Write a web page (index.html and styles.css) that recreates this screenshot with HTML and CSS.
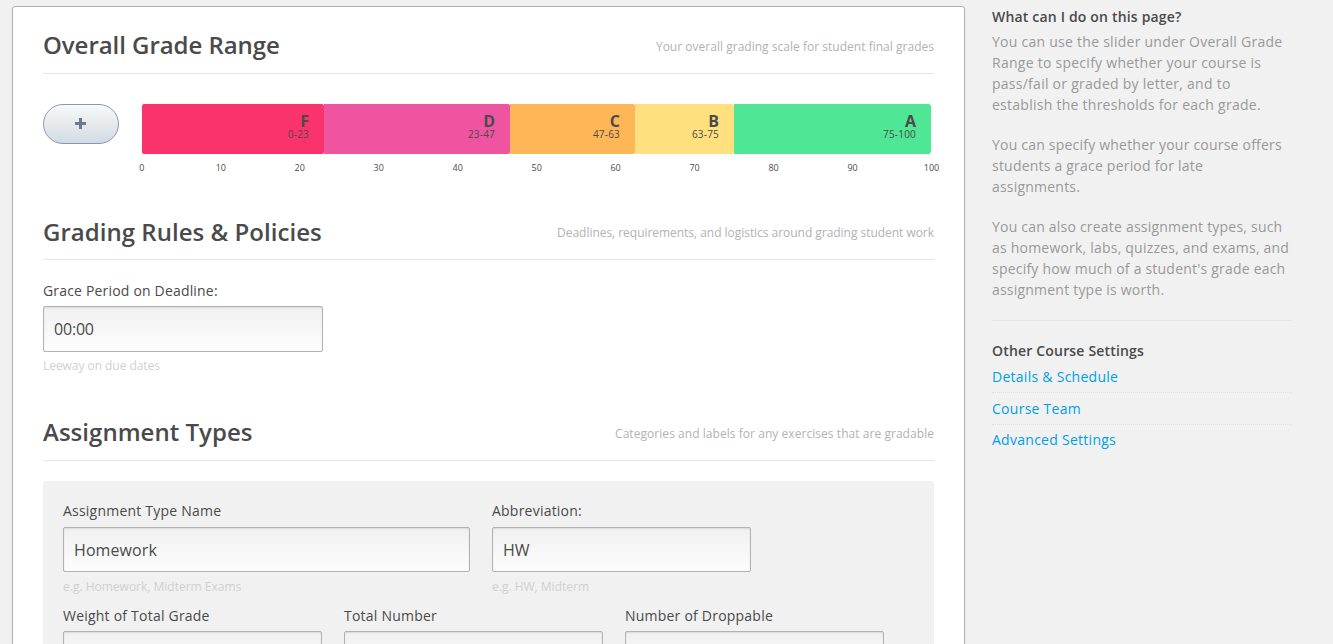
FILE: index.html
```html
<!DOCTYPE html>
<html lang="en">
<head>
<meta charset="utf-8">
<title>Grading</title>
<link rel="stylesheet" href="styles.css">
</head>
<body>
<div class="page">
  <main class="content">
    <section class="group group-range">
      <header class="head"><h2>Overall Grade Range</h2><span class="tip">Your overall grading scale for student final grades</span></header>
      <div class="grade">
        <button class="add" aria-label="Add grade"><svg width="12" height="12" viewBox="0 0 12 12"><path d="M4 0h3v4h4v3h-4v4h-3v-4h-4v-3h4z" fill="#6c7a8c"/></svg></button>
        <div class="scale">
          <div class="bar">
            <div class="seg seg-f"><b>F</b><span>0-23</span></div>
            <div class="seg seg-d"><b>D</b><span>23-47</span></div>
            <div class="seg seg-c"><b>C</b><span>47-63</span></div>
            <div class="seg seg-b"><b>B</b><span>63-75</span></div>
            <div class="seg seg-a"><b>A</b><span>75-100</span></div>
          </div>
          <div class="ticks"><span>0</span><span>10</span><span>20</span><span>30</span><span>40</span><span>50</span><span>60</span><span>70</span><span>80</span><span>90</span><span>100</span></div>
        </div>
      </div>
    </section>
    <section class="group group-rules">
      <header class="head"><h2>Grading Rules &amp; Policies</h2><span class="tip">Deadlines, requirements, and logistics around grading student work</span></header>
      <div class="field grace">
        <label for="grace">Grace Period on Deadline:</label>
        <input id="grace" type="text" value="00:00">
        <span class="hint">Leeway on due dates</span>
      </div>
    </section>
    <section class="group group-types">
      <header class="head"><h2>Assignment Types</h2><span class="tip">Categories and labels for any exercises that are gradable</span></header>
      <div class="card">
        <div class="row">
          <div class="field wide">
            <label for="name">Assignment Type Name</label>
            <input id="name" type="text" value="Homework">
            <span class="hint">e.g. Homework, Midterm Exams</span>
          </div>
          <div class="field short">
            <label for="abbr">Abbreviation:</label>
            <input id="abbr" type="text" value="HW">
            <span class="hint">e.g. HW, Midterm</span>
          </div>
        </div>
        <div class="row">
          <div class="field short"><label for="weight">Weight of Total Grade</label><input id="weight" type="text"></div>
          <div class="field short"><label for="total">Total Number</label><input id="total" type="text"></div>
          <div class="field short"><label for="drop">Number of Droppable</label><input id="drop" type="text"></div>
        </div>
      </div>
    </section>
  </main>
  <aside class="side">
    <section class="help">
      <h3>What can I do on this page?</h3>
      <p>You can use the slider under Overall Grade Range to specify whether your course is pass/fail or graded by letter, and to establish the thresholds for each grade.</p>
      <p>You can specify whether your course offers students a grace period for late assignments.</p>
      <p>You can also create assignment types, such as homework, labs, quizzes, and exams, and specify how much of a student's grade each assignment type is worth.</p>
    </section>
    <section class="links">
      <h3>Other Course Settings</h3>
      <ul>
        <li><a href="#">Details &amp; Schedule</a></li>
        <li><a href="#">Course Team</a></li>
        <li><a href="#">Advanced Settings</a></li>
      </ul>
    </section>
  </aside>
</div>
</body>
</html>
```
FILE: styles.css
```css
* { box-sizing: border-box; }
html, body { height: 100%; overflow: hidden; }
body {
  margin: 0;
  background: #f1f1f1;
  color: #4a4a4a;
  font-family: "Open Sans", sans-serif;
  font-size: 14px;
}
h2, h3, p, ul { margin: 0; padding: 0; }
.page { display: flex; gap: 27px; padding: 6px 0 0 12px; height: 100%; }
.content {
  width: 953px;
  height: 760px;
  flex: none;
  padding: 16px 30px 0;
  background: #fff;
  border: 1px solid #b2b2b2;
  border-radius: 3px;
  box-shadow: 0 1px 2px rgba(0, 0, 0, 0.1);
}
.group-range { height: 187px; }
.group-rules { height: 200px; }
.head {
  display: flex;
  justify-content: space-between;
  align-items: flex-start;
  height: 51px;
  padding-top: 4px;
  border-bottom: 1px solid #e5e5e5;
}
.group-rules .head { height: 50px; }
h2 { font-size: 24px; line-height: 36px; font-weight: 600; }
.group-range h2 { letter-spacing: -0.05px; }
.group-types h2, .group-rules h2 { letter-spacing: 0.03px; }
.tip { padding-top: 11px; font-size: 12px; line-height: 18px; color: #b2b2b2; letter-spacing: 0.02px; }
.group-rules .tip { padding-top: 10px; letter-spacing: -0.035px; }
.group-types .tip { letter-spacing: 0.05px; }

.grade { display: flex; gap: 23px; margin-top: 30px; }
.add {
  display: flex;
  align-items: center;
  justify-content: center;
  width: 76px;
  height: 40px;
  padding: 0;
  border: 1px solid #8b98ab;
  border-radius: 20px;
  background: linear-gradient(#f6f9fa, #e6eaed 50%, #d1dae5);
  box-shadow: inset 0 1px 0 rgba(255, 255, 255, 0.3);
}
.scale { width: 789px; }
.bar { display: flex; height: 50px; border-radius: 2px; overflow: hidden; }
.seg {
  display: flex;
  flex-direction: column;
  align-items: flex-end;
  padding: 9px 15px 0 0;
  border-radius: 0 2px 2px 0;
}
.seg b { font-size: 16px; line-height: 16px; font-weight: 700; }
.seg span { font-size: 10px; line-height: 11px; letter-spacing: 0.2px; }
.seg-f { width: 182px; background: #fb336c; }
.seg-d { width: 186px; background: #ef54a1; }
.seg-c { width: 125px; background: #ffb657; }
.seg-b { width: 99px; background: #ffdf7e; }
.seg-a { width: 197px; background: #4fe696; }
.ticks { display: flex; justify-content: space-between; margin: 7px -10.6px 0 -10.2px; }
.ticks span { width: 20px; text-align: center; font-size: 9px; line-height: 14px; }

.field { display: flex; flex-direction: column; }
label { font-size: 14px; line-height: 21px; letter-spacing: 0.22px; }
input {
  height: 45px;
  padding: 0 10px;
  border: 1px solid #b2b2b2;
  border-radius: 2px;
  background: linear-gradient(#f1f1f1, #fdfdfd);
  box-shadow: inset 0 1px 2px rgba(0, 0, 0, 0.1);
  color: #4a4a4a;
  font: 16px "Open Sans", sans-serif;
}
#name { letter-spacing: 0.1px; }
#grace { letter-spacing: -0.2px; }
.hint { margin-top: 6px; font-size: 12px; line-height: 18px; color: #d0d0d0; }
.grace { width: 280px; margin-top: 20px; }
.grace label { line-height: 22px; margin-bottom: 4px; letter-spacing: 0.18px; }
.grace input { height: 46px; }
.grace .hint { margin-top: 5px; letter-spacing: -0.05px; }
.card { height: 330px; margin-top: 20px; padding: 19px 20px; background: #f1f1f1; border-radius: 3px; }
.card label { margin-bottom: 6px; }
.row { display: flex; gap: 22px; height: 105px; }
.row + .row label { margin-bottom: 5px; }
.wide { width: 407px; }
.short { width: 259px; }

.side { width: 300px; flex: none; }
.side h3 { font-size: 14px; line-height: 21px; font-weight: 600; letter-spacing: 0.18px; }
.help { height: 315px; border-bottom: 1px solid #e5e5e5; }
.help h3 { margin-bottom: 4px; }
.help p { margin-bottom: 19px; line-height: 21px; color: #999; letter-spacing: 0.26px; }
.help p + p { letter-spacing: 0.21px; }
.links { padding-top: 19px; }
.links ul { list-style: none; padding-top: 1px; }
.links li { height: 32px; padding-top: 5px; line-height: 21px; border-bottom: 1px dotted #ddd; }
.links li:first-child { height: 31px; padding-top: 4px; }
.links li:last-child { border: 0; padding-top: 4px; }
.links a { color: #009fe6; text-decoration: none; letter-spacing: 0.27px; }
```
